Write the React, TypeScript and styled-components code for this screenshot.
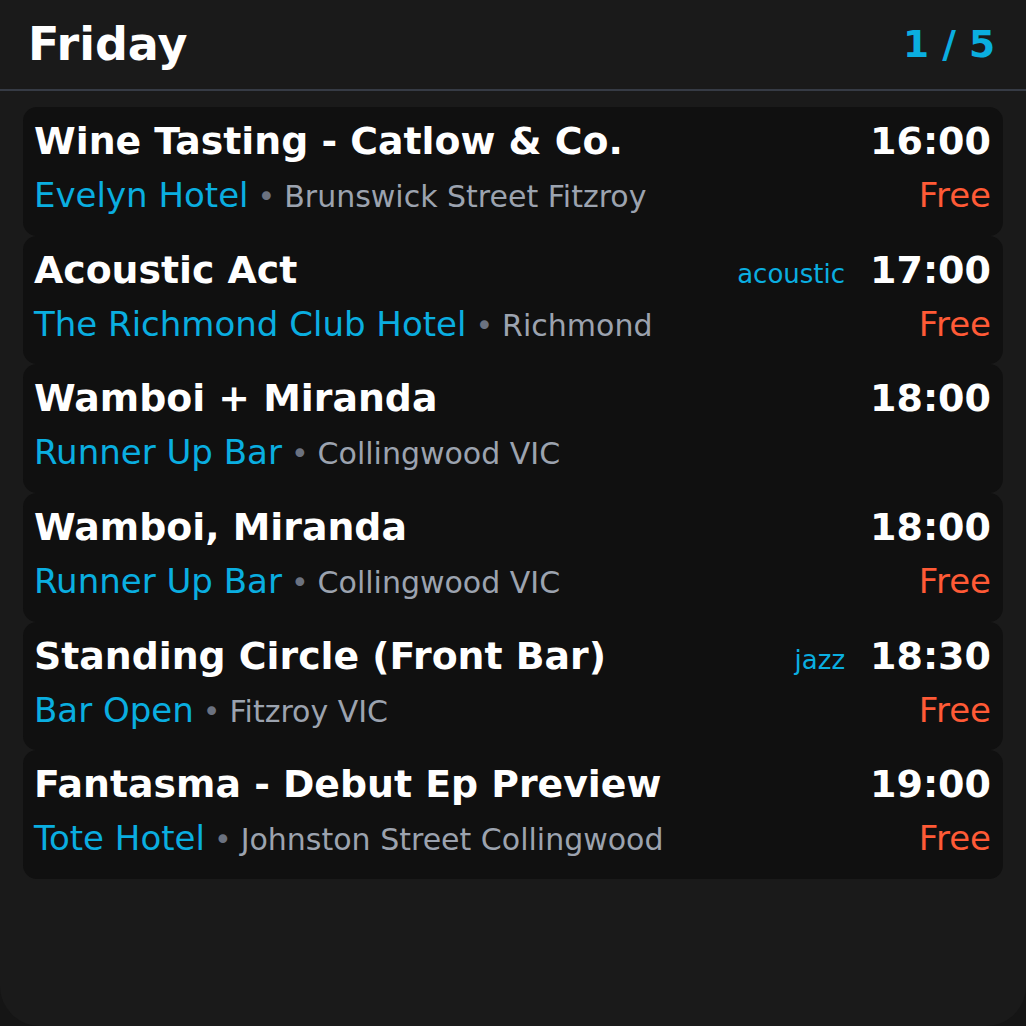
import React from "react";
import styled, { createGlobalStyle } from "styled-components";

const GlobalStyle = createGlobalStyle`
  html, body {
    margin: 0;
    padding: 0;
    background: #151515;
    font-family: "DejaVu Sans", "Liberation Sans", sans-serif;
  }
  * { box-sizing: border-box; }
`;

const Screen = styled.div`
  width: 1026px;
  height: 1026px;
  background: #1a1a1a;
  border-radius: 0 0 40px 40px;
  overflow: hidden;
  display: flex;
  flex-direction: column;
`;

const Header = styled.header`
  height: 91px;
  display: flex;
  align-items: center;
  justify-content: space-between;
  padding: 0 31px 2px 28px;
  border-bottom: 2px solid #363b45;
`;

const Day = styled.h1`
  margin: 0;
  font-size: 46px;
  font-weight: 700;
  color: #ffffff;
`;

const Counter = styled.div`
  font-size: 37.5px;
  font-weight: 700;
  color: #0aaee0;
`;

const List = styled.div`
  display: flex;
  flex-direction: column;
  padding: 16px 23px 0;
`;

const Card = styled.div`
  background: #101010;
  border-radius: 14px;
  height: 128.7px;
  padding: 12px 12px 0 11px;
  display: flex;
  flex-direction: column;
  gap: 12px;
`;

const Row = styled.div`
  display: flex;
  align-items: baseline;
  justify-content: space-between;
  white-space: nowrap;
`;

const Title = styled.div`
  font-size: 37.8px;
  font-weight: 700;
  color: #ffffff;
`;

const Right = styled.div`
  display: flex;
  align-items: baseline;
  gap: 25px;
`;

const Tag = styled.span`
  font-size: 26px;
  color: #0aaee0;
`;

const Time = styled.span`
  font-size: 38px;
  font-weight: 700;
  color: #ffffff;
`;

const Place = styled.div`
  display: flex;
  align-items: baseline;
  gap: 9px;
`;

const Venue = styled.span`
  font-size: 34px;
  color: #0aaee0;
`;

const Dot = styled.span`
  font-size: 30px;
  color: #6b7280;
`;

const Location = styled.span`
  font-size: 30px;
  color: #9ca3af;
`;

const Price = styled.span`
  font-size: 34px;
  color: #ff5a36;
`;

type Event = {
  title: string;
  tag?: string;
  time: string;
  venue: string;
  location: string;
  price?: string;
};

const events: Event[] = [
  { title: "Wine Tasting - Catlow & Co.", time: "16:00", venue: "Evelyn Hotel", location: "Brunswick Street Fitzroy", price: "Free" },
  { title: "Acoustic Act", tag: "acoustic", time: "17:00", venue: "The Richmond Club Hotel", location: "Richmond", price: "Free" },
  { title: "Wamboi + Miranda", time: "18:00", venue: "Runner Up Bar", location: "Collingwood VIC" },
  { title: "Wamboi, Miranda", time: "18:00", venue: "Runner Up Bar", location: "Collingwood VIC", price: "Free" },
  { title: "Standing Circle (Front Bar)", tag: "jazz", time: "18:30", venue: "Bar Open", location: "Fitzroy VIC", price: "Free" },
  { title: "Fantasma - Debut Ep Preview", time: "19:00", venue: "Tote Hotel", location: "Johnston Street Collingwood", price: "Free" },
];

export default function App() {
  return (
    <>
      <GlobalStyle />
      <Screen>
        <Header>
          <Day>Friday</Day>
          <Counter>1 / 5</Counter>
        </Header>
        <List>
          {events.map((e, i) => (
            <Card key={i}>
              <Row>
                <Title>{e.title}</Title>
                <Right>
                  {e.tag && <Tag>{e.tag}</Tag>}
                  <Time>{e.time}</Time>
                </Right>
              </Row>
              <Row>
                <Place>
                  <Venue>{e.venue}</Venue>
                  <Dot>•</Dot>
                  <Location>{e.location}</Location>
                </Place>
                {e.price && <Price>{e.price}</Price>}
              </Row>
            </Card>
          ))}
        </List>
      </Screen>
    </>
  );
}
